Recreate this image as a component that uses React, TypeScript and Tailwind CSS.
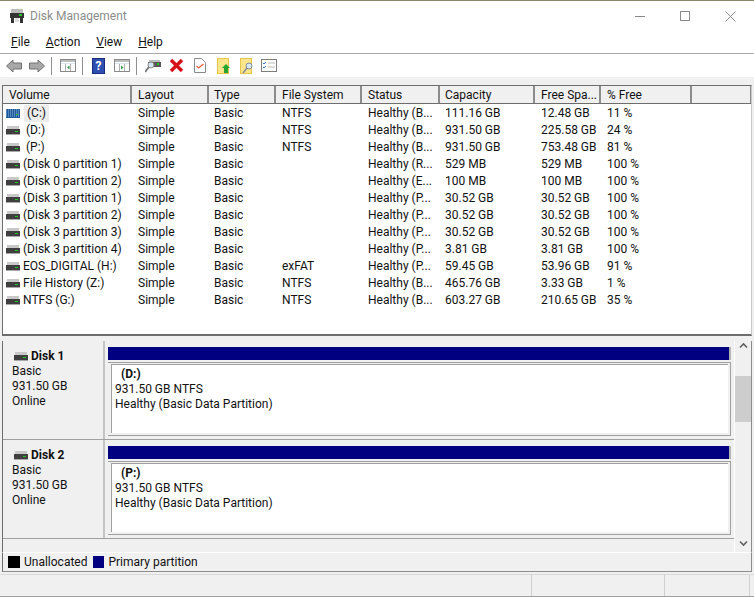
const rows = [
  ['(C:)', 'Simple', 'Basic', 'NTFS', 'Healthy (B...', '111.16 GB', '12.48 GB', '11 %'],
  ['(D:)', 'Simple', 'Basic', 'NTFS', 'Healthy (B...', '931.50 GB', '225.58 GB', '24 %'],
  ['(P:)', 'Simple', 'Basic', 'NTFS', 'Healthy (B...', '931.50 GB', '753.48 GB', '81 %'],
  ['(Disk 0 partition 1)', 'Simple', 'Basic', '', 'Healthy (R...', '529 MB', '529 MB', '100 %'],
  ['(Disk 0 partition 2)', 'Simple', 'Basic', '', 'Healthy (E...', '100 MB', '100 MB', '100 %'],
  ['(Disk 3 partition 1)', 'Simple', 'Basic', '', 'Healthy (P...', '30.52 GB', '30.52 GB', '100 %'],
  ['(Disk 3 partition 2)', 'Simple', 'Basic', '', 'Healthy (P...', '30.52 GB', '30.52 GB', '100 %'],
  ['(Disk 3 partition 3)', 'Simple', 'Basic', '', 'Healthy (P...', '30.52 GB', '30.52 GB', '100 %'],
  ['(Disk 3 partition 4)', 'Simple', 'Basic', '', 'Healthy (P...', '3.81 GB', '3.81 GB', '100 %'],
  ['EOS_DIGITAL (H:)', 'Simple', 'Basic', 'exFAT', 'Healthy (P...', '59.45 GB', '53.96 GB', '91 %'],
  ['File History (Z:)', 'Simple', 'Basic', 'NTFS', 'Healthy (B...', '465.76 GB', '3.33 GB', '1 %'],
  ['NTFS (G:)', 'Simple', 'Basic', 'NTFS', 'Healthy (B...', '603.27 GB', '210.65 GB', '35 %'],
];

const headers = ['Volume', 'Layout', 'Type', 'File System', 'Status', 'Capacity', 'Free Spa...', '% Free', ''];
const widths = ['w-[129px]', 'w-[77px]', 'w-[67px]', 'w-[86px]', 'w-[78px]', 'w-[95px]', 'w-[66px]', 'w-[91px]', 'w-[60px]'];
const pads = ['pl-[6px]', 'pl-[6px]', 'pl-[5px]', 'pl-[6px]', 'pl-[6px]', 'pl-[5px]', 'pl-[6px]', 'pl-[6px]', 'pl-[6px]'];

function DriveIcon() {
  return (
    <svg width="14" height="9" viewBox="0 0 14 9" className="shrink-0">
      <rect x="1" y="0" width="12" height="3" fill="#c8c8c8" />
      <rect x="0" y="3" width="14" height="5" fill="#3f3f3f" />
      <rect x="9" y="5" width="3" height="1" fill="#22c322" />
      <rect x="0" y="8" width="14" height="1" fill="#a8a8a8" />
    </svg>
  );
}

function StripedDrive() {
  return (
    <svg width="14" height="9" viewBox="0 0 14 9" className="shrink-0">
      <rect width="14" height="9" fill="#1f5a9c" />
      <path d="M0 1h14M0 3h14M0 5h14M0 7h14" stroke="#8fb8e0" strokeDasharray="1 1" />
      <rect x="10" y="5" width="2" height="1" fill="#22c322" />
    </svg>
  );
}

function WindowIcon({ right }: { right?: boolean }) {
  return (
    <svg width="16" height="13" viewBox="0 0 16 13" className="shrink-0">
      <rect x=".5" y=".5" width="15" height="12" fill="#fff" stroke="#8a8a8a" />
      <path d="M1 1h14v2H1z" fill="#bcbcbc" />
      <path d="M1 4h14v1H1z" fill="#dce6ee" />
      <path d="M5.500 5v7M10.500 5v7" stroke="#b0b0b0" />
      {right ? <path d="M7 6.500v4l2.500-2z" fill="#2f9e44" /> : <path d="M9.500 6.500v4L7 8.500z" fill="#2f9e44" />}
    </svg>
  );
}

function Toolbar() {
  const sep = <div className="w-px h-[18px] bg-[#8f8f8f]" />;
  return (
    <div className="h-[23px] flex items-center pl-[6px] bg-white">
      <svg width="16" height="14" viewBox="0 0 16 14" className="shrink-0"><path d="M.5 7 7 1v3h8.500v6H7v3z" fill="#a8a8a8" stroke="#707070" /></svg>
      <svg width="16" height="14" viewBox="0 0 16 14" className="ml-[7px] shrink-0"><path d="M15.500 7 9 1v3H.5v6H9v3z" fill="#a8a8a8" stroke="#707070" /></svg>
      <div className="ml-[6px]">{sep}</div>
      <div className="ml-[8px]"><WindowIcon /></div>
      <div className="ml-[6px]">{sep}</div>
      <div className="ml-[9px] w-[13px] h-[16px] bg-[#2f4fb0] border border-[#1b2d80] text-white text-[12px] font-bold leading-[14px] text-center">?</div>
      <div className="ml-[9px]"><WindowIcon right /></div>
      <div className="ml-[6px]">{sep}</div>
      <svg width="16" height="14" viewBox="0 0 16 14" className="ml-[8px] shrink-0">
        <rect x="3" y="3" width="13" height="5" fill="#555" />
        <rect x="4" y="1" width="11" height="2" fill="#bbb" />
        <rect x="12" y="4" width="2" height="2" fill="#22c322" />
        <circle cx="6" cy="6" r="3" fill="#cfe4f5" stroke="#8a8a8a" />
        <path d="M4 8 0 13" stroke="#777" strokeWidth="2" />
      </svg>
      <svg width="15" height="15" viewBox="0 0 15 15" className="ml-[8px] shrink-0"><path d="M2 2l11 11M13 2 2 13" stroke="#d5111b" strokeWidth="3.500" /></svg>
      <svg width="12" height="15" viewBox="0 0 12 15" className="ml-[10px] shrink-0">
        <path d="M.5.5h7l4 4v10H.5z" fill="#fff" stroke="#8a8a8a" />
        <path d="M2.500 8l2 2 5-4" fill="none" stroke="#e8603c" strokeWidth="1.300" />
      </svg>
      <svg width="14" height="16" viewBox="0 0 14 16" className="ml-[11px] shrink-0">
        <rect x=".5" y=".5" width="11" height="15" fill="#fde58e" stroke="#e5c64a" />
        <path d="M9 6l4 4h-2v5H7v-5H5z" fill="#22a332" />
      </svg>
      <svg width="14" height="16" viewBox="0 0 14 16" className="ml-[9px] shrink-0">
        <rect x=".5" y=".5" width="11" height="15" fill="#fde58e" stroke="#e5c64a" />
        <circle cx="9" cy="8" r="3" fill="#d7e8f5" stroke="#7f8c99" />
        <path d="M7 10 3 15" stroke="#7f8c99" strokeWidth="1.500" />
      </svg>
      <svg width="16" height="13" viewBox="0 0 16 13" className="ml-[7px] shrink-0">
        <rect x=".5" y=".5" width="15" height="12" fill="#fff" stroke="#7c7c7c" />
        <path d="M2 4l1 1 2-2M2 8l1 1 2-2" fill="none" stroke="#2f7fd5" />
        <path d="M7 4h7M7 8h7" stroke="#b8b8b8" />
      </svg>
    </div>
  );
}

function DiskRow({ name, drive }: { name: string; drive: string }) {
  return (
    <div className="h-[99px] flex border-b border-[#a0a0a0]">
      <div className="w-[102px] bg-[#f0f0f0] pl-[9px] pt-[8px] border-r-2 border-[#c4c4c4] leading-[15px] shrink-0">
        <div className="flex items-center font-bold h-[15px] pl-[2px]">
          <DriveIcon />
          <span className="ml-[3px]">{name}</span>
        </div>
        <div>Basic</div>
        <div>931.50 GB</div>
        <div>Online</div>
      </div>
      <div className="flex-1 pl-[3px] pr-[3px] pt-[6px] bg-[#f0f0f0]">
        <div className="h-[13px] bg-[#000080] border-r-2 border-[#b4b4b4] mb-[2px]" />
        <div className="h-[74px] border-r border-b border-t border-[#a0a0a0] pl-[3px] pt-px pr-[2px] pb-[2px]">
          <div className="h-full border-l border-t border-[#a0a0a0] bg-white pl-[3px] pt-[2px] leading-[15px]">
            <div className="font-bold pl-[6px]">{drive}</div>
            <div>931.50 GB NTFS</div>
            <div>Healthy (Basic Data Partition)</div>
          </div>
        </div>
      </div>
    </div>
  );
}

export default function App() {
  return (
    <div className="w-[754px] h-[597px] bg-white border-t border-[#8a8a6a] font-['Roboto',sans-serif] text-[12px] text-[#111] overflow-hidden flex flex-col">
      <div className="h-[30px] shrink-0 flex items-center pl-[9px]">
        <svg width="16" height="16" viewBox="0 0 16 16" className="shrink-0">
          <rect x="2" y="1" width="12" height="4" fill="#bdbdbd" />
          <rect x="1" y="5" width="14" height="5" fill="#333" />
          <rect x="10" y="6" width="3" height="2" fill="#22c322" />
          <rect x="2" y="10" width="3" height="5" fill="#333" />
          <rect x="6" y="10" width="4" height="4" fill="#ddd" />
          <rect x="11" y="10" width="3" height="5" fill="#333" />
        </svg>
        <span className="ml-[5px] text-[#8c8c8c]">Disk Management</span>
        <div className="ml-auto flex items-center pr-[18px] gap-[35px]">
          <div className="w-[10px] h-px bg-[#8a8a8a]" />
          <div className="w-[10px] h-[10px] border border-[#8a8a8a]" />
          <svg width="11" height="11" viewBox="0 0 11 11"><path d="M.5.5l10 10M10.500.5l-10 10" stroke="#8a8a8a" /></svg>
        </div>
      </div>
      <div className="h-[23px] shrink-0 flex items-center pl-[11px] gap-[16px] border-b border-[#a9a9a9] text-[#111]">
        <span><u>F</u>ile</span>
        <span><u>A</u>ction</span>
        <span><u>V</u>iew</span>
        <span><u>H</u>elp</span>
      </div>
      <Toolbar />
      <div className="flex-1 min-h-0 bg-[#f0f0f0] pt-[8px] pl-[2px] pr-[2px] flex flex-col">
        <div className="h-[251px] shrink-0 bg-white border-t border-l border-[#6d6d6d] border-b-2 border-r border-b-[#6d6d6d] border-r-[#c8c8c8] overflow-hidden">
          <div className="flex h-[18px] border-b border-[#6d6d6d] bg-[#f0f0f0]">
            {headers.map((h, i) => (
              <div key={i} className={`${widths[i]} ${pads[i]} shrink-0 border-r-2 border-[#8c8c8c] leading-[18px] whitespace-nowrap`}>{h}</div>
            ))}
          </div>
          <div className="pt-px">
            {rows.map((r, i) => (
              <div key={i} className="flex h-[17px] items-center leading-[17px]">
                {r.map((c, j) => (
                  <div key={j} className={`${widths[j]} shrink-0 whitespace-nowrap ${j === 0 ? 'pl-[3px] flex items-center' : pads[j]}`}>
                    {j === 0 && (i === 0 ? <StripedDrive /> : <DriveIcon />)}
                    {j === 0 ? <span className={i === 0 ? 'ml-[4px] px-[3px] bg-[#ececec]' : i < 3 ? 'ml-[6px]' : 'ml-[3px]'}>{c}</span> : c}
                  </div>
                ))}
              </div>
            ))}
          </div>
        </div>
        <div className="h-[5px] shrink-0" />
        <div className="flex flex-1 min-h-0 border-l border-[#6d6d6d] border-r border-r-[#8c8c8c]">
          <div className="flex-1 min-w-0">
            <DiskRow name="Disk 1" drive="(D:)" />
            <DiskRow name="Disk 2" drive="(P:)" />
          </div>
          <div className="w-[17px] shrink-0 bg-[#f0f0f0] border-l border-white flex flex-col items-center">
            <svg width="9" height="7" viewBox="0 0 9 7" className="mt-px shrink-0"><path d="M1 5.500 4.500 2 8 5.500" fill="none" stroke="#606060" strokeWidth="1.600" /></svg>
            <div className="w-full h-[46px] mt-[27px] bg-[#cdcdcd]" />
            <div className="flex-1" />
            <svg width="9" height="7" viewBox="0 0 9 7" className="mb-[5px] shrink-0"><path d="M1 1.500 4.500 5 8 1.500" fill="none" stroke="#606060" strokeWidth="1.600" /></svg>
          </div>
        </div>
        <div className="h-[20px] shrink-0 border-l border-[#6d6d6d] border-r border-r-[#8c8c8c] border-b border-b-[#8c8c8c] border-t border-t-white flex items-center pl-[5px]">
          <div className="w-[12px] h-[12px] bg-black" />
          <span className="ml-[4px]">Unallocated</span>
          <div className="ml-[6px] w-[11px] h-[12px] bg-[#000080]" />
          <span className="ml-[4px]">Primary partition</span>
        </div>
        <div className="h-[2px] shrink-0" />
      </div>
      <div className="h-[23px] shrink-0 bg-[#f0f0f0] border-t border-[#d9d9d9] border-b border-b-[#a0a0a0] flex">
        <div className="w-[532px] border-r border-[#d0d0d0]" />
        <div className="w-[133px] border-r border-[#d0d0d0]" />
        <div className="w-[85px] border-r border-[#d0d0d0]" />
      </div>
    </div>
  );
}
